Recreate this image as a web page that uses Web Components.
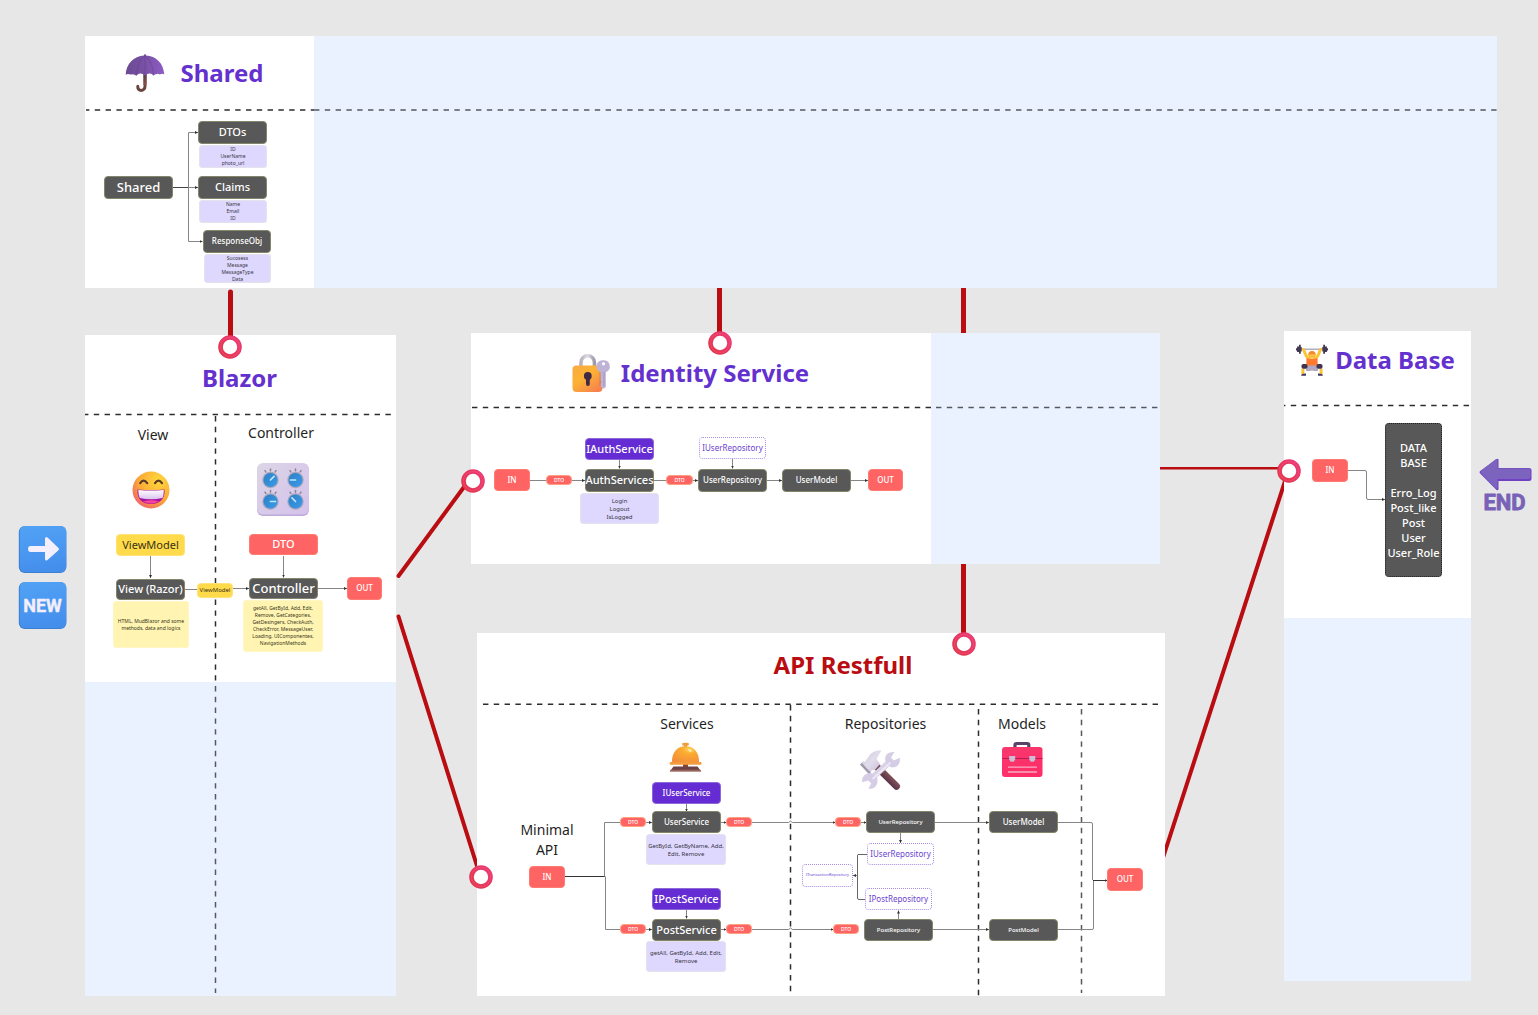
<!DOCTYPE html>
<html lang="en">
<head>
<meta charset="utf-8">
<title>Architecture board</title>
<style>
html, body { margin: 0; min-height: 100%; background: #e7e7e7; }
body { font-family: "Noto Sans", "Open Sans", sans-serif; }
</style>
</head>
<body>
<architecture-board></architecture-board>

<template id="board">
<style>
:host { display: block; position: relative; width: 100%; min-height: 100vh; overflow: hidden; background: #e7e7e7; color: #1f1f1f; }
.wires { position: absolute; left: 0; top: 0; width: 100%; height: 100%; pointer-events: none; }
.red { stroke: #b90d12; stroke-width: 5; fill: none; stroke-linecap: round; }
.dash { stroke: #2c2c2c; stroke-width: 1.5; stroke-dasharray: 5.4 5.4; fill: none; }
.soft { stroke: #55585f; }
.thin { stroke: #858585; stroke-width: 1; fill: none; }
.arr { marker-end: url(#tip); }
</style>

<svg class="wires" aria-hidden="true">
  <g class="red">
    <path d="M230.500 292V340M719.500 280V340M963.500 280V640"/>
    <path stroke-width="4" d="M398.500 576L464 487"/>
    <path stroke-width="4" d="M398.500 616.500L477 866"/>
    <path stroke-width="4" d="M1160 867L1286 478"/>
    <path stroke-width="2.500" d="M1150 468.300H1280"/>
  </g>
</svg>

<board-frame x="85" y="36" w="1412" h="252" split="229" side="right"></board-frame>
<board-frame x="85" y="335" w="311" h="661" split="347" side="bottom"></board-frame>
<board-frame x="471" y="333" w="689" h="231" split="460" side="right"></board-frame>
<board-frame x="477" y="633" w="688" h="363"></board-frame>
<board-frame x="1284" y="331" w="187" h="650" split="287" side="bottom"></board-frame>

<svg class="wires" aria-hidden="true">
  <defs>
    <marker id="tip" markerWidth="4" markerHeight="4" refX="3" refY="1.500" orient="auto" markerUnits="userSpaceOnUse"><path d="M0 0L3 1.500L0 3Z" fill="#333"/></marker>
  </defs>
  <g class="red"><path stroke-linecap="butt" d="M230.500 335V340M719.500 334V340M963.500 634V640"/></g>
  <g class="dash">
    <path stroke-dashoffset="2" d="M86 110H314"/><path class="soft" d="M314 110H1497"/>
    <path stroke-dashoffset="2" d="M85 414.500H392"/>
    <path d="M215.500 416V682"/><path class="soft" d="M215.500 686V993"/>
    <path d="M472 407.500H931"/><path class="soft" d="M936 407.500H1160"/>
    <path stroke-dashoffset="4" d="M1284 405.500H1469"/>
    <path d="M483 704.200H1160"/>
    <path d="M790.500 705V992M978.500 709V996"/><path class="soft" d="M1081.500 709V993"/>
  </g>
  <g class="thin">
    <path stroke="#444" d="M173 187.500H188.500"/>
    <path class="arr" d="M188.500 187.500V132.500H198"/>
    <path class="arr" d="M188.500 187.500H198"/>
    <path class="arr" d="M188.500 187.500V241.500H202.500"/>
    <path class="arr" d="M150.500 556V578"/>
    <path class="arr" d="M283.500 556V577.500"/>
    <path d="M185 589.500H198"/>
    <path class="arr" d="M233 588.500H249"/>
    <path class="arr" d="M318 588.500H347"/>
    <path d="M530 480.500H547"/>
    <path class="arr" d="M572 480.500H585"/>
    <path class="arr" d="M619.500 460V468.500"/>
    <path d="M654 480.500H667"/>
    <path class="arr" d="M693 480.500H698"/>
    <path class="arr" d="M732.500 459V468.500"/>
    <path class="arr" d="M767 480.500H782"/>
    <path class="arr" d="M851 480.500H868"/>
    <path class="arr" d="M1348 470.500H1365Q1366.500 470.500 1366.500 472V498Q1366.500 499.500 1368 499.500H1385"/>
    <path stroke="#333" d="M565 876.500H605"/>
    <path d="M620 822.500H604.500V876.500M605.500 876.500V929.500H620"/>
    <path class="arr" d="M646 822.500H652"/><path class="arr" d="M646 929.500H652"/>
    <path class="arr" d="M721 822.500H726.500"/><path class="arr" d="M721 929.500H726.500"/>
    <path class="arr" d="M752 822.500H788.500Q790.500 819.500 792.500 822.500H835.500"/>
    <path class="arr" d="M752 929.500H788.500Q790.500 926.500 792.500 929.500H833.500"/>
    <path class="arr" d="M861 822.500H866.500"/>
    <path class="arr" d="M686.500 804V811.500"/><path class="arr" d="M686.500 910V918.500"/>
    <path class="arr" d="M935 822.500H989"/><path class="arr" d="M933 929.500H989"/>
    <path class="arr" d="M900.500 833V843"/><path class="arr" d="M898.500 919V910.500"/>
    <path stroke="#666" d="M867 854.500H858Q857.500 854.500 857.500 856V898Q857.500 899.500 859 899.500H865"/>
    <path class="arr" d="M857.500 875.500H853"/>
    <path d="M1058 822.500H1091Q1092.500 822.500 1092.500 824V880M1058 929.500H1092Q1093.500 929.500 1093.500 928V880"/>
    <path class="arr" stroke="#333" d="M1093 880.500H1107.500"/>
  </g>
</svg>

<board-label kind="title" x="170" y="56" w="104" h="34">Shared</board-label>
<board-label kind="title" x="185" y="361" w="109" h="34">Blazor</board-label>
<board-label kind="title" x="605" y="356" w="220" h="34">Identity Service</board-label>
<board-label kind="title" x="1324" y="343" w="142" h="34">Data Base</board-label>
<board-label kind="title" tone="red" x="753" y="648" w="180" h="34">API Restfull</board-label>
<board-label x="123" y="425" w="60" h="20">View</board-label>
<board-label x="236" y="423" w="90" h="20">Controller</board-label>
<board-label x="642" y="714" w="90" h="20">Services</board-label>
<board-label x="835" y="714" w="101" h="20">Repositories</board-label>
<board-label x="986" y="714" w="72" h="20">Models</board-label>
<board-label x="517" y="820" w="60" h="40">Minimal API</board-label>

<flow-node x="104" y="176" w="69" h="23" size="13">Shared</flow-node>
<flow-node x="198" y="121" w="69" h="23">DTOs</flow-node>
<flow-node x="198" y="176" w="69" h="23">Claims</flow-node>
<flow-node x="203" y="230" w="68" h="23" size="8">ResponseObj</flow-node>
<note-card x="199" y="145" w="68" h="23" size="5">ID<br>UserName<br>photo_url</note-card>
<note-card x="199" y="200" w="68" h="23" size="5">Name<br>Email<br>ID</note-card>
<note-card x="204" y="254" w="67" h="29" size="5">Sucosess<br>Message<br>MessageType<br>Data</note-card>

<flow-node tone="yellow" x="116" y="534" w="69" h="22">ViewModel</flow-node>
<flow-node tone="coral" x="249" y="534" w="69" h="21">DTO</flow-node>
<flow-node x="116" y="579" w="69" h="21">View (Razor)</flow-node>
<flow-node x="249" y="578" w="69" h="21" size="13">Controller</flow-node>
<flow-node tone="coral" x="347" y="577" w="35" h="23" size="8">OUT</flow-node>
<flow-node tone="yellow" x="197" y="583" w="36" h="15" size="6">ViewModel</flow-node>
<note-card tone="yellow" x="113" y="601" w="76" h="47" size="5">HTML, MudBlazor and some<br>methods, data and logics</note-card>
<note-card tone="yellow" x="243" y="600" w="80" h="52" size="5">getAll, GetById, Add, Edit,<br>Remove, GetCategories,<br>GetDesingers, CheckAuth,<br>CheckError, MessageUser,<br>Loading, UIComponentes,<br>NavigationMethods</note-card>

<flow-node tone="coral" x="494" y="469" w="36" h="22" size="8">IN</flow-node>
<flow-node tone="pill" x="546" y="475" w="26" h="10" size="5">DTO</flow-node>
<flow-node tone="violet" x="585" y="438" w="69" h="22">IAuthService</flow-node>
<flow-node x="585" y="469" w="69" h="23">AuthServices</flow-node>
<flow-node tone="pill" x="666" y="475" w="27" h="10" size="5">DTO</flow-node>
<note-card x="580" y="493" w="79" h="31" size="6">Login<br>Logout<br>IsLogged</note-card>
<flow-node tone="ghost" x="699" y="437" w="67" h="22" size="8">IUserRepository</flow-node>
<flow-node x="698" y="469" w="69" h="23" size="8">UserRepository</flow-node>
<flow-node x="782" y="469" w="69" h="23" size="8">UserModel</flow-node>
<flow-node tone="coral" x="868" y="469" w="35" h="22" size="8">OUT</flow-node>

<flow-node tone="coral" x="1312" y="459" w="36" h="23" size="8">IN</flow-node>
<flow-node tone="store" x="1385" y="423" w="57" h="154">DATA<br>BASE<br><br>Erro_Log<br>Post_like<br>Post<br>User<br>User_Role</flow-node>

<flow-node tone="coral" x="529" y="866" w="36" h="22" size="8">IN</flow-node>
<flow-node tone="pill" x="620" y="817" w="26" h="10" size="5">DTO</flow-node>
<flow-node tone="violet" x="652" y="782" w="69" h="22" size="8">IUserService</flow-node>
<flow-node x="652" y="811" w="69" h="22" size="8">UserService</flow-node>
<note-card x="646" y="834" w="80" h="31" size="6">GetById, GetByName, Add,<br>Edit, Remove</note-card>
<flow-node tone="pill" x="726" y="817" w="26" h="10" size="5">DTO</flow-node>
<flow-node tone="pill" x="620" y="924" w="26" h="10" size="5">DTO</flow-node>
<flow-node tone="violet" x="652" y="888" w="69" h="22">IPostService</flow-node>
<flow-node x="652" y="919" w="69" h="22">PostService</flow-node>
<note-card x="646" y="941" w="80" h="31" size="6">getAll, GetById, Add, Edit,<br>Remove</note-card>
<flow-node tone="pill" x="726" y="924" w="26" h="10" size="5">DTO</flow-node>
<flow-node tone="pill" x="835" y="817" w="26" h="10" size="5">DTO</flow-node>
<flow-node tone="pill" x="833" y="924" w="26" h="10" size="5">DTO</flow-node>
<flow-node x="866" y="811" w="69" h="22" size="6">UserRepository</flow-node>
<flow-node tone="ghost" x="867" y="843" w="67" h="22" size="8">IUserRepository</flow-node>
<flow-node tone="ghost" x="802" y="864" w="51" h="23" size="4">ITransactionRepository</flow-node>
<flow-node tone="ghost" x="865" y="888" w="67" h="22" size="8">IPostRepository</flow-node>
<flow-node x="864" y="919" w="69" h="22" size="6">PostRepository</flow-node>
<flow-node x="989" y="811" w="69" h="22" size="8">UserModel</flow-node>
<flow-node x="989" y="919" w="69" h="22" size="6">PostModel</flow-node>
<flow-node tone="coral" x="1107" y="868" w="36" h="23" size="8">OUT</flow-node>

<ring-pin x="218" y="335" w="24" h="24"></ring-pin>
<ring-pin x="708" y="331" w="24" h="24"></ring-pin>
<ring-pin x="952" y="632" w="24" h="24"></ring-pin>
<ring-pin x="461" y="469" w="24" h="24"></ring-pin>
<ring-pin x="469" y="865" w="24" h="24"></ring-pin>
<ring-pin x="1277" y="459" w="24" h="24"></ring-pin>

<board-icon name="umbrella" x="125" y="53" w="40" h="40"></board-icon>
<board-icon name="grin" x="132" y="471" w="38" h="38"></board-icon>
<board-icon name="knobs" x="257" y="463" w="52" h="53"></board-icon>
<board-icon name="lock" x="571" y="353" w="40" h="40"></board-icon>
<board-icon name="lifter" x="1296" y="344" w="32" h="32"></board-icon>
<board-icon name="bell" x="669" y="742" w="33" h="30"></board-icon>
<board-icon name="tools" x="859" y="749" w="42" h="42"></board-icon>
<board-icon name="toolbox" x="1001" y="741" w="42" h="37"></board-icon>
<board-icon name="next" x="18" y="525" w="49" h="49"></board-icon>
<board-icon name="fresh" x="18" y="581" w="49" h="49"></board-icon>
<board-icon name="end" x="1478" y="457" w="54" h="56"></board-icon>
</template>

<script>
const ICONS = {
umbrella: `<svg viewBox="0 0 40 40"><defs><linearGradient id="a" x1="0" x2="1"><stop offset="0" stop-color="#6b4a93"/><stop offset=".5" stop-color="#7a51a6"/><stop offset="1" stop-color="#8c5cc4"/></linearGradient><linearGradient id="b" x2="0" y2="1"><stop offset="0" stop-color="#4a3555"/><stop offset="1" stop-color="#8a4f45"/></linearGradient></defs>
<path d="M20 17V33.500a3.900 3.900 0 0 1-3.900 3.900A3.300 3.300 0 0 1 12.800 34v-.7" fill="none" stroke="#6b453f" stroke-width="3" stroke-linecap="round"/><path d="M18.500 18h3v14h-3Z" fill="url(#b)"/>
<path d="M19 2.500q0-1.500 1-1.500t1 1.500C31 3 38.500 10 39.300 21.500q-2-1.500-4.600.1-1.300-1.600-4-.4-1.500.3-2.200 1.600-1.800-2.600-4.300-2.300-3 .2-4.200 2.300-1.200-2.100-4.200-2.300-2.500-.3-4.300 2.300-2.800-2.400-6.200-1.200-2.600-1.300-4.600.2C1 11 9 3 19 2.500Z" fill="url(#a)"/>
<path d="M20 2.500Q12.500 8 11.700 21.500M20 2.500Q27.500 8 28.500 21.500M20 2.500V21" fill="none" stroke="#553784" stroke-opacity=".45" stroke-width=".8"/></svg>`,
grin: `<svg viewBox="0 0 38 38"><defs><radialGradient id="a" cx=".7" cy=".25" r=".9"><stop offset="0" stop-color="#ffd83b"/><stop offset=".6" stop-color="#fba838"/><stop offset="1" stop-color="#ef5470"/></radialGradient><linearGradient id="b" x2="0" y2="1"><stop offset="0" stop-color="#fff"/><stop offset="1" stop-color="#d9c3ee"/></linearGradient></defs>
<circle cx="19" cy="19" r="18.500" fill="url(#a)"/>
<path d="M8.200 12.200q3.300-5 7 0M23 12.200q3.500-5 7 0" fill="none" stroke="#5d3b2b" stroke-width="2.200" stroke-linecap="round"/>
<path d="M5.500 18.500q13.500 1.200 27 0c1 10-5.500 14.500-13.500 14.500S4.500 28.500 5.500 18.500Z" fill="#a812a4"/><path d="M6.300 19q12.700 1.200 25.500 0 .1 5-1.300 8-11.500 2.500-22.800 0Q6.300 24 6.300 19Z" fill="url(#b)"/><path d="M11 30.500q8-2.300 16 0-8 4-16 0Z" fill="#f7429b"/></svg>`,
knobs: (() => {
  const knob = (x, y, a) => `<g transform="translate(${x} ${y})"><g stroke="#8b8491" stroke-width="1.500" stroke-linecap="round"><path d="M-5.500-9.300l.8 1.200M0-11v1.800M5.500-9.300l-.8 1.200"/></g><circle r="8.200" fill="#aaa5bd"/><circle r="7" fill="url(#k)"/><path transform="rotate(${a})" d="M0 0H5" stroke="#bfe8ff" stroke-width="1.700" stroke-linecap="round"/></g>`;
  return `<svg viewBox="0 0 52 53"><defs><linearGradient id="p" x1="0" x2="1" y2="1"><stop offset="0" stop-color="#dcd5e6"/><stop offset="1" stop-color="#d4c2ec"/></linearGradient><linearGradient id="k" x1="0" x2="1" y2="1"><stop offset="0" stop-color="#2c80c4"/><stop offset="1" stop-color="#3b9bea"/></linearGradient></defs>
<rect y="1" width="52" height="52" rx="6" fill="#bdaad9"/><rect width="52" height="51.500" rx="6" fill="url(#p)"/>${knob(13.5,17,-45)}${knob(38.5,17,180)}${knob(13.5,38.5,0)}${knob(38.5,38.5,-135)}</svg>`; })(),
lock: `<svg viewBox="0 0 40 40"><defs><linearGradient id="a" x1="0" x2=".8" y2="1"><stop offset="0" stop-color="#f9a943"/><stop offset=".45" stop-color="#fcb334"/><stop offset="1" stop-color="#f7804f"/></linearGradient><linearGradient id="b" x2="1"><stop offset="0" stop-color="#b9b1bf"/><stop offset=".5" stop-color="#e0dae6"/><stop offset="1" stop-color="#9f98a8"/></linearGradient></defs>
<path d="M10 14V9.500a6.700 6.700 0 0 1 13.400 0V14" fill="none" stroke="url(#b)" stroke-width="3.600"/>
<rect x="1.500" y="12.500" width="30" height="26.500" rx="4" fill="url(#a)"/>
<circle cx="16.800" cy="23" r="3.900" fill="#402b45"/><path d="M15 25h3.800v6a1.900 1.900 0 0 1-3.800 0Z" fill="#402b45"/>
<path d="M28.500 17h2v16h-2Z" fill="#cb7044" opacity=".55"/>
<path d="M32.500 7.300a6.200 6.200 0 0 1 2.300 12V34l-2 1.800-3.200-2.300v-3l1-1.300-1-1.300V19.300a6.200 6.200 0 0 1 2.900-12Z" fill="#bfb3d5"/><circle cx="32.500" cy="10.800" r="1.600" fill="#fff"/><path d="M33 19v14" stroke="#a193bd" stroke-width="1"/></svg>`,
lifter: `<svg viewBox="0 0 32 32"><path d="M2 5.200H30" stroke="#a19aaa" stroke-width="1.200"/><path d="M3 .8h1.800v9H3ZM1 2.500h2v5.500H1ZM0 4.200h1v2.300H0ZM4.800 3h.9v4.500h-.9ZM27.200.8H29v9h-1.800ZM29 2.500h2v5.500h-2ZM31 4.200h1v2.300h-1ZM26.300 3h.9v4.500h-.9Z" fill="#443a56"/>
<path d="M7.500 5.500L10 11.500L13 15M24.500 5.500L22 11.500L19 15" fill="none" stroke="#fac535" stroke-width="3" stroke-linecap="round" stroke-linejoin="round"/>
<path d="M10.500 14q5.500 2 11 0l.3 9.500H10.200Z" fill="#ff7a2e"/>
<circle cx="16" cy="11.200" r="3.600" fill="#ffbd3e"/><path d="M12.300 11q0-4 3.700-4t3.700 4q-3-2-7.400 0Z" fill="#f58b2e"/>
<path d="M7 24.500L6.800 30M25 24.500L25.200 30" stroke="#fac535" stroke-width="3"/>
<path d="M10.500 21.500h11l.5 5.500h-4l-2-.5-2 .5h-4Z" fill="#b3a8c4"/>
<rect x="5.500" y="20" width="6" height="4.800" rx="1.800" fill="#41334d"/><rect x="20.500" y="20" width="6" height="4.800" rx="1.800" fill="#41334d"/>
<path d="M5 31.800q.5-2.500 5-2.200v2.200ZM27 31.800q-.5-2.500-5-2.200v2.200Z" fill="#443a56"/></svg>`,
bell: `<svg viewBox="0 0 33 30"><defs><radialGradient id="a" cx=".65" cy=".2" r=".9"><stop offset="0" stop-color="#ffd35a"/><stop offset=".3" stop-color="#fbab31"/><stop offset="1" stop-color="#f28c3b"/></radialGradient></defs>
<path d="M14 21h5v4h-5Z" fill="#8d4637"/><path d="M4.500 24.500h24l3.500 4.700H1Z" fill="#6b4145"/><path d="M1.500 27.800h30l.8 1.600H.8Z" fill="#9a6558"/>
<path d="M13 2q0-1.300 3.500-1.300T20 2q0 1.500-2 1.800V6h-3V3.800q-2-.3-2-1.800Z" fill="#ef9c3c"/>
<path d="M3 20.500C2.500 10 8.500 4.300 16.500 4.300S30.500 10 30 20.500Z" fill="url(#a)"/><rect x=".6" y="20" width="32" height="2.800" rx="1.400" fill="#f59a3c"/><ellipse cx="21" cy="8.500" rx="2" ry="1.200" transform="rotate(30 21 8.500)" fill="#ffe9a8"/></svg>`,
tools: `<svg viewBox="0 0 42 42"><defs><linearGradient id="h" gradientUnits="userSpaceOnUse" x1="24" y1="30" x2="31" y2="23"><stop offset="0" stop-color="#553048"/><stop offset="1" stop-color="#8d5a5c"/></linearGradient><linearGradient id="m" x1="0" y1="0" x2="1" y2="1"><stop offset="0" stop-color="#c9c6d2"/><stop offset=".5" stop-color="#e2dded"/><stop offset="1" stop-color="#c2b9d3"/></linearGradient></defs>
<path d="M15 15L37.500 37.200" stroke="url(#h)" stroke-width="7" stroke-linecap="round"/>
<path d="M.8 15.500L4 12.300l1.700.7L11.500 5Q15 1.500 22.500 1.200L17.500 10l3.500 5-5 6-3.500.3-.6 2.500-2.200 1.300Z" fill="url(#m)"/><path d="M1 15.500l9 9.500 1.500-1.500L3 14Z" fill="#9e98aa"/>
<path d="M13 29L31 12.500" stroke="#d9d2e7" stroke-width="6"/>
<path d="M26.300 12Q25 2.500 35.500 3l-3.500 5.500 2.700 3 6-2.700Q42 18.500 32 18.500ZM18.300 29.300Q20 39.500 9.500 40l2.700-5.700-3-2.800-6 1.800Q2.500 24 12.500 24Z" fill="#d4cde5"/><path d="M13.500 30L31.500 13.500" stroke="#ece8f4" stroke-width="1.800"/></svg>`,
toolbox: `<svg viewBox="0 0 42 37"><defs><linearGradient id="a" x2=".4" y2="1"><stop offset="0" stop-color="#f7386e"/><stop offset="1" stop-color="#ff2e68"/></linearGradient></defs>
<path d="M14 7V4q0-1.500 1.500-1.500h10.800q1.500 0 1.500 1.500v3" fill="none" stroke="#59436b" stroke-width="3.200"/>
<rect x="1" y="6" width="40.500" height="30" rx="3" fill="url(#a)"/><path d="M1 17.500H41.500" stroke="#b91d52" stroke-width="1.200"/>
<path d="M8.200 15h6v3.500l-1.500 2.300H9.700L8.200 18.500ZM28.300 15h6v3.500l-1.500 2.300h-3L28.300 18.500Z" fill="#cdbcd6"/><path d="M7 26.200H36M7 31H36" stroke="#f7adc6" stroke-width="1.300"/></svg>`,
next: `<svg viewBox="0 0 49 49"><defs><linearGradient id="a" x2=".2" y2="1"><stop offset="0" stop-color="#51a3f6"/><stop offset="1" stop-color="#458fec"/></linearGradient></defs><rect x=".8" y="1" width="47.500" height="47" rx="6" fill="#3a7ed0"/><rect x="1.800" y="1" width="46.500" height="46" rx="5.500" fill="url(#a)"/><path d="M12 21H27V13.500q.5-2.500 2.500-1L40.500 23q1.200 1.200 0 2.300L29.500 35q-2 1.500-2.500-1V27H12q-2-.2-2-3t2-3Z" fill="#f4effd"/></svg>`,
fresh: `<svg viewBox="0 0 49 49"><defs><linearGradient id="a" x2=".2" y2="1"><stop offset="0" stop-color="#51a3f6"/><stop offset="1" stop-color="#458fec"/></linearGradient></defs><rect x=".8" y="1" width="47.500" height="47" rx="6" fill="#3a7ed0"/><rect x="1.800" y="1" width="46.500" height="46" rx="5.500" fill="url(#a)"/><text x="24.500" y="30.500" text-anchor="middle" font-family="Roboto, sans-serif" font-weight="700" font-size="18" fill="#f4effd" stroke="#f4effd" stroke-width=".4" stroke-linejoin="round">NEW</text></svg>`,
end: `<svg viewBox="0 0 54 56"><path d="M2.200 16.500q-1.200-1.300 0-2.500L18.500 2q2-1 2 1V11H51q2.500 0 2.500 2.500v8q0 2.500-2.500 2.500H20.500v8q-.3 2-2 1Z" fill="#7040c4"/><path d="M3 16q-1-1 0-2L17.500 2.500q2-1 2 1v8H50.500q2 0 2 2v6.500q0 2-2 2h-31v8.500q-.3 2-2 1Z" fill="#7c63bd"/><text x="26.500" y="53" text-anchor="middle" font-family="Roboto, sans-serif" font-weight="700" font-size="22" fill="#7862b8" stroke="#7862b8" stroke-width=".8" stroke-linejoin="round">END</text></svg>`
};

/* Places an element on the free canvas from its x, y, w and h attributes. */
class CanvasItem extends HTMLElement {
  connectedCallback() {
    if (this.shadowRoot) return;
    const s = this.style;
    s.left = this.getAttribute('x') + 'px';
    s.top = this.getAttribute('y') + 'px';
    s.width = this.getAttribute('w') + 'px';
    s.height = this.getAttribute('h') + 'px';
    this.attachShadow({ mode: 'open' }).innerHTML =
      `<style>:host{position:absolute;display:flex;box-sizing:border-box;align-items:center;justify-content:center;text-align:center}</style>` + this.view();
  }
}

customElements.define('board-frame', class extends CanvasItem {
  view() {
    const split = this.getAttribute('split');
    const dir = this.getAttribute('side') === 'bottom' ? 'column' : 'row';
    return `<style>:host{background:#fff;flex-direction:${dir};align-items:stretch;justify-content:flex-start}
      .sheet{flex:0 0 ${split || 0}px}.tint{flex:1;background:#ebf2ff}</style>` +
      (split ? `<div class="sheet"></div><div class="tint"></div>` : '');
  }
});

customElements.define('board-label', class extends CanvasItem {
  view() {
    return `<style>:host{font-size:14px;line-height:20px;color:#1f1f1f}
      :host([kind=title]){font-size:24px;line-height:34px;font-weight:700;color:#6431cf;white-space:nowrap}
      :host([tone=red]){color:#b90d12}h2{margin:0;font:inherit}</style>` +
      (this.getAttribute('kind') === 'title' ? '<h2><slot></slot></h2>' : '<span><slot></slot></span>');
  }
});

customElements.define('flow-node', class extends CanvasItem {
  view() {
    return `<style>:host{font-size:${this.getAttribute('size') || 11}px;line-height:14px;padding-bottom:1px;font-weight:500;white-space:nowrap;color:#fff;background:#585858;border:1px solid #85856a;border-radius:4px}
      :host([tone=coral]){background:#ff6464;border-color:#ff7a70}
      :host([tone=pill]){background:#ff6464;border-color:#ffa080;line-height:6px;padding:0}
      :host([tone=yellow]){background:#ffdb4b;border-color:#ffe27a;color:#3a3214;font-weight:400}
      :host([tone=violet]){background:#652cd3;border-color:#8d68d8}
      :host([tone=ghost]){background:#fff;border:1px dotted #a88ce6;color:#6a3fd0;font-weight:400}
      :host([tone=store]){border:1px dotted #222;line-height:15px;padding:0}</style><span><slot></slot></span>`;
  }
});

customElements.define('note-card', class extends CanvasItem {
  view() {
    const size = +this.getAttribute('size');
    return `<style>:host{font-size:${size}px;line-height:${size === 5 ? 7 : 8}px;white-space:nowrap;color:#38353f;background:#ded8ff;border:1px solid #e6e2ec;border-radius:3px}
      :host([tone=yellow]){background:#fff4b2;border-color:#fff6c4;color:#3a3620}</style><span><slot></slot></span>`;
  }
});

customElements.define('ring-pin', class extends CanvasItem {
  view() {
    return `<svg viewBox="0 0 24 24" width="100%" height="100%" aria-hidden="true"><defs><linearGradient id="g" x1="0" y1="1" x2="1" y2="0"><stop offset="0" stop-color="#e0364a"/><stop offset="1" stop-color="#ea3a78"/></linearGradient></defs><circle cx="12" cy="12" r="9.500" fill="#fff" stroke="url(#g)" stroke-width="4.600"/><circle cx="12" cy="12" r="9.600" fill="none" stroke="#ff5c7c" stroke-opacity=".35" stroke-width="1.400"/></svg>`;
  }
});

customElements.define('board-icon', class extends CanvasItem {
  view() { return `<style>svg{width:100%;height:100%;overflow:visible}</style>` + ICONS[this.getAttribute('name')]; }
});

customElements.define('architecture-board', class extends HTMLElement {
  constructor() {
    super();
    this.attachShadow({ mode: 'open' }).append(document.getElementById('board').content.cloneNode(true));
  }
});
</script>
</body>
</html>
